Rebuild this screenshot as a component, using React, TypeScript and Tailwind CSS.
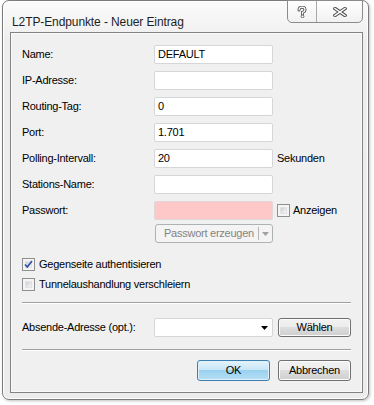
import React from "react";

function Input({ value, pink }: { value?: string; pink?: boolean }) {
  return (
    <div
      className={
        "w-[119px] h-[19px] border rounded-[2px] pl-[3px] flex items-center text-[11px] text-black " +
        (pink ? "bg-[#ffc8c8] border-[#e2d6d6]" : "bg-white border-[#d4d6da]")
      }
    >
      {value}
    </div>
  );
}

function Check({ checked }: { checked?: boolean }) {
  return (
    <div className="w-[13px] h-[13px] border border-[#8e8f8f] bg-[#f4f4f4] p-[2px] shrink-0">
      <div className="w-full h-full bg-[linear-gradient(135deg,#cbcfd5,#f6f6f6)] border border-[#e2e2e2] relative">
        {checked && (
          <svg className="absolute left-[-2px] top-[-2px]" width="9" height="9" viewBox="0 0 9 9">
            <path d="M1 4.5 L3.3 7 L8 1" fill="none" stroke="#2a4fa8" strokeWidth="1.6" />
          </svg>
        )}
      </div>
    </div>
  );
}

function Btn({ label, def, h }: { label: string; def?: boolean; h: string }) {
  return (
    <div
      className={
        "w-[73px] flex items-center justify-center rounded-[3px] border text-[11px] text-black " +
        h +
        " " +
        (def
          ? "border-[#3c7fb1] bg-[linear-gradient(#e5f4fc,#c4e5f6_50%,#98d1ef_50%,#b7e0f5)] shadow-[inset_0_0_0_1px_#dff2fc]"
          : "border-[#707070] bg-[linear-gradient(#f2f2f2,#ebebeb_50%,#dddddd_50%,#cfcfcf)] shadow-[inset_0_0_0_1px_#fcfcfc]")
      }
    >
      {label}
    </div>
  );
}

function Row({ label, children }: { label: string; children: React.ReactNode }) {
  return (
    <div className="flex items-center h-[19px]">
      <div className="w-[132px] text-[11px] text-black">{label}</div>
      {children}
    </div>
  );
}

export default function App() {
  return (
    <div className="w-[374px] h-[405px] bg-white font-['Liberation_Sans',Arial,sans-serif] tracking-[-0.25px] overflow-hidden">
      <div className="ml-[2px] w-[367px] h-[400px] rounded-[7px] border border-[#7b7b7b] bg-[linear-gradient(#fbfbfb,#eeeeee_40px,#ececec)] shadow-[1px_1px_3px_rgba(0,0,0,0.25),inset_0_0_0_1px_#ffffff] flex flex-col">
        {/* title bar */}
        <div className="h-[31px] flex items-start relative">
          <div className="pl-[9px] pt-[12px] text-[12px] text-[#1e1e1e] tracking-[-0.1px]">
            L2TP-Endpunkte - Neuer Eintrag
          </div>
          <div className="ml-auto mr-[5px] mt-[-1px] flex h-[23px] border border-[#8c8c8c] rounded-b-[5px] bg-[linear-gradient(#ffffff,#f1f1f1)] overflow-hidden">
            <div className="w-[29px] flex items-center justify-center border-r border-[#a8a8a8]">
              <svg width="10" height="12" viewBox="0 0 10 12">
                <path d="M2 4 Q2 1.2 5 1.2 Q8 1.2 8 3.8 Q8 5.6 5.5 6.4 L5.5 8" fill="none" stroke="#555" strokeWidth="3" strokeLinecap="round" />
                <path d="M2 4 Q2 1.2 5 1.2 Q8 1.2 8 3.8 Q8 5.6 5.5 6.4 L5.5 8" fill="none" stroke="#fff" strokeWidth="1.2" strokeLinecap="round" />
                <circle cx="5.5" cy="10.5" r="1.4" fill="#fff" stroke="#555" strokeWidth="0.9" />
              </svg>
            </div>
            <div className="w-[45px] flex items-center justify-center">
              <svg width="14" height="10" viewBox="0 0 14 10">
                <path d="M2 1.5 L12 8.5 M12 1.5 L2 8.5" fill="none" stroke="#555" strokeWidth="3.4" strokeLinecap="square" />
                <path d="M2 1.5 L12 8.5 M12 1.5 L2 8.5" fill="none" stroke="#fff" strokeWidth="1.4" strokeLinecap="square" />
              </svg>
            </div>
          </div>
        </div>
        {/* client */}
        <div className="ml-[7px] w-[353px] h-[361px] border border-[#838383] bg-[#f0f0f0] shadow-[inset_0_0_0_1px_#fafafa] flex flex-col pl-[11px] pt-[12px]">
          <div className="flex flex-col gap-[7px]">
            <Row label="Name:">
              <Input value="DEFAULT" />
            </Row>
            <Row label="IP-Adresse:">
              <Input />
            </Row>
            <Row label="Routing-Tag:">
              <Input value="0" />
            </Row>
            <Row label="Port:">
              <Input value="1.701" />
            </Row>
            <Row label="Polling-Intervall:">
              <Input value="20" />
              <div className="ml-[4px] text-[11px]">Sekunden</div>
            </Row>
            <Row label="Stations-Name:">
              <Input />
            </Row>
            <Row label="Passwort:">
              <Input pink />
              <div className="ml-[4px] flex items-center gap-[3px]">
                <Check />
                <span className="text-[11px]">Anzeigen</span>
              </div>
            </Row>
          </div>
          <div className="mt-[4px] ml-[133px] w-[118px] h-[19px] border border-[#adb2b5] rounded-[3px] bg-[#f4f4f4] flex items-center text-[11px] text-[#838383]">
            <span className="pl-[8px] flex-1">Passwort erzeugen</span>
            <div className="w-px h-[13px] bg-[#b5b5b5]" />
            <div className="w-[13px] flex justify-center">
              <svg width="7" height="4" viewBox="0 0 7 4">
                <path d="M0 0 L7 0 L3.5 4 Z" fill="#a0a0a0" />
              </svg>
            </div>
          </div>
          <div className="mt-[11px] flex flex-col">
            <div className="h-[20px] flex items-center gap-[4px]">
              <Check checked />
              <span className="text-[11px]">Gegenseite authentisieren</span>
            </div>
            <div className="h-[20px] flex items-center gap-[4px]">
              <Check />
              <span className="text-[11px]">Tunnelaushandlung verschleiern</span>
            </div>
          </div>
          <div className="mt-[8px] w-[329px] h-[2px] border-t border-[#a0a0a0] border-b border-b-white" />
          <div className="mt-[14px] flex items-center h-[19px]">
            <div className="w-[132px] text-[11px]">Absende-Adresse (opt.):</div>
            <div className="w-[119px] h-[19px] bg-white border border-[#d4d6da] rounded-[2px] flex items-center justify-end pr-[4px]">
              <svg width="7" height="4" viewBox="0 0 7 4">
                <path d="M0 0 L7 0 L3.5 4 Z" fill="#000" />
              </svg>
            </div>
            <div className="ml-[5px]">
              <Btn label="Wählen" h="h-[19px]" />
            </div>
          </div>
          <div className="mt-[12px] w-[329px] h-[2px] border-t border-[#a0a0a0] border-b border-b-white" />
          <div className="mt-[9px] flex justify-end gap-[8px] w-[329px]">
            <Btn label="OK" def h="h-[21px]" />
            <Btn label="Abbrechen" h="h-[21px]" />
          </div>
        </div>
      </div>
    </div>
  );
}
